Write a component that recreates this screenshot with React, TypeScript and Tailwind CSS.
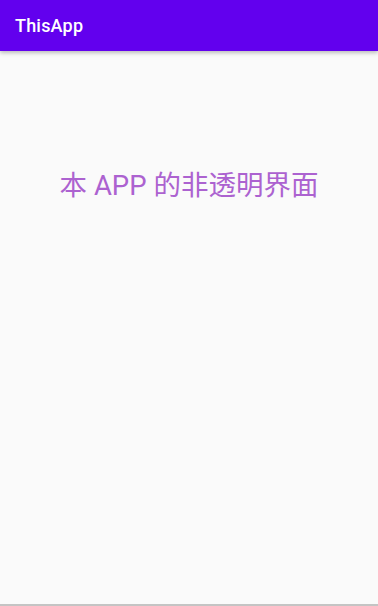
export default function App() {
  return (
    <div className="w-[378px] h-[606px] flex flex-col bg-[#fafafa] overflow-hidden" style={{ fontFamily: 'Roboto, "Noto Sans CJK SC", sans-serif' }}>
      <div className="h-[51px] shrink-0 bg-[#6200ee] flex items-center px-[15px] shadow-[0_2px_4px_rgba(0,0,0,0.25)] relative z-10">
        <span className="text-white text-[18px] font-medium tracking-[0.2px]">ThisApp</span>
      </div>
      <div className="flex-1 flex flex-col items-center pt-[118px]">
        <span className="text-[#ac62d0] text-[27.5px] leading-[34px]">本 APP 的非透明界面</span>
      </div>
      <div className="h-[2px] bg-[#c4c4c4] shrink-0" />
    </div>
  );
}
